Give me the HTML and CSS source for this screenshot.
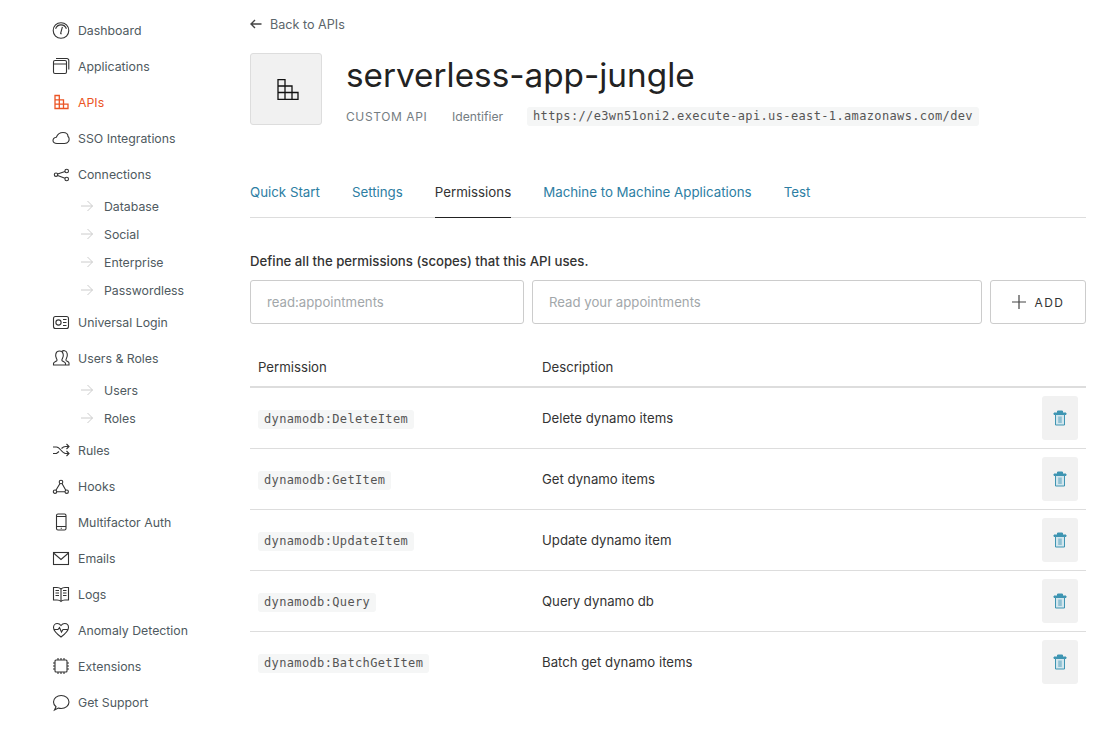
FILE: index.html
```html
<!DOCTYPE html>
<html lang="en">
<head>
  <meta charset="UTF-8">
  <meta name="viewport" content="width=device-width, initial-scale=1.0">
  <title>serverless-app-jungle</title>
  <link rel="stylesheet" href="styles.css">
</head>
<body>
  <div class="layout">
    <nav class="sidebar">
      <a class="nav-item"><svg class="nav-icon" viewBox="0 0 20 20"><circle cx="10" cy="10.500" r="7.800"/><path d="M4.600 8.800a5.700 5.700 0 0 1 10.800 0M11.400 6.800l-1.900 7M9.500 13.800h1.200"/></svg>Dashboard</a>
      <a class="nav-item"><svg class="nav-icon" viewBox="0 0 20 20"><rect x="2.500" y="4.500" width="13" height="13" rx="1.500"/><path d="M2.500 8h13M5 2.500h11a1.800 1.800 0 0 1 1.800 1.800v9.200"/></svg>Applications</a>
      <a class="nav-item active"><svg class="nav-icon" viewBox="0 0 20 20"><path d="M4 3.500h4.300v13H4zM4 7.800h8.500v8.700M4 12.200h13v4.300H4M8.300 7.800v8.700M12.500 12.200v4.300"/></svg>APIs</a>
      <a class="nav-item"><svg class="nav-icon" viewBox="0 0 20 20"><path d="M6 15.500c-2.500 0-4-1.200-4-3 0-1.800 1.500-3 3.300-3.300C6.500 6.500 9 4.500 12 4.500c3 0 5 1.800 5 4 1.300 1 1.500 3.500.5 5-1 1.500-2.500 2-4 2z"/></svg>SSO Integrations</a>
      <a class="nav-item"><svg class="nav-icon" viewBox="0 0 20 20"><circle cx="5" cy="10.700" r="1.700"/><circle cx="15.700" cy="7" r="1.800"/><circle cx="15.700" cy="15" r="1.800"/><path d="M6.600 10.100l7.400-2.500M6.600 11.400l7.400 2.900"/></svg>Connections</a>
      <div class="subnav">
        <a class="sub-item"><svg class="sub-arrow" viewBox="0 0 14 12"><path d="M1 6h11.500M7.500 1l5 5-5 5"/></svg>Database</a>
        <a class="sub-item"><svg class="sub-arrow" viewBox="0 0 14 12"><path d="M1 6h11.500M7.500 1l5 5-5 5"/></svg>Social</a>
        <a class="sub-item"><svg class="sub-arrow" viewBox="0 0 14 12"><path d="M1 6h11.500M7.500 1l5 5-5 5"/></svg>Enterprise</a>
        <a class="sub-item"><svg class="sub-arrow" viewBox="0 0 14 12"><path d="M1 6h11.500M7.500 1l5 5-5 5"/></svg>Passwordless</a>
      </div>
      <a class="nav-item"><svg class="nav-icon" viewBox="0 0 20 20"><rect x="2.500" y="4.500" width="15" height="12" rx="2"/><circle cx="7.500" cy="10.500" r="2.600"/><path d="M12 7.500h3.500M12 10.500h3.500M12 13.500h3.500"/></svg>Universal Login</a>
      <a class="nav-item"><svg class="nav-icon" viewBox="0 0 20 20"><path d="M2.500 17v-1.500c0-1.300 2.700-2 3.400-2.800.5-.7 0-1.500-.5-2.300C4 8 4.300 3 8.500 3s4.500 5 3 7.400c-.5.800-1 1.600-.5 2.300.7.800 3.500 1.500 3.500 2.800V17zM11 3.300c.8-.6 1.800-.8 2.700-.5 3 .7 3.200 5 1.800 7.500-.4.700-.9 1.400-.4 2.200.5.700 2.900 1.300 2.900 2.500V17h-3.500"/></svg>Users &amp; Roles</a>
      <div class="subnav">
        <a class="sub-item"><svg class="sub-arrow" viewBox="0 0 14 12"><path d="M1 6h11.500M7.500 1l5 5-5 5"/></svg>Users</a>
        <a class="sub-item"><svg class="sub-arrow" viewBox="0 0 14 12"><path d="M1 6h11.500M7.500 1l5 5-5 5"/></svg>Roles</a>
      </div>
      <a class="nav-item"><svg class="nav-icon" viewBox="0 0 20 20"><path d="M2 7h3.500c3.500 0 5.500 6.500 9 6.500H18M2 13.500h3.500l2.500-2M10.500 8.500c1-1 2.500-2 4-2H18M15.500 4l2.500 2.500L15.500 9M15.500 11l2.500 2.500-2.500 2.500"/></svg>Rules</a>
      <a class="nav-item"><svg class="nav-icon" viewBox="0 0 20 20"><circle cx="10" cy="6" r="1.800"/><circle cx="4" cy="15.700" r="1.700"/><circle cx="15.700" cy="15.700" r="1.700"/><path d="M9 7.500l-4.100 6.700M11 7.500l3.800 6.700M5.700 15.700h8.300"/></svg>Hooks</a>
      <a class="nav-item"><svg class="nav-icon" viewBox="0 0 20 20"><rect x="5.500" y="2" width="9.500" height="16" rx="1.500"/><path d="M5.500 4.500h9.500M5.500 14.500h9.500M9.700 16.300h1.200"/></svg>Multifactor Auth</a>
      <a class="nav-item"><svg class="nav-icon" viewBox="0 0 20 20"><rect x="2.500" y="4.500" width="15" height="12"/><path d="M2.500 5L10 11.500 17.500 5"/></svg>Emails</a>
      <a class="nav-item"><svg class="nav-icon" viewBox="0 0 20 20"><path d="M10 5c-1-1-2.500-1.500-4-1.500H2.500V16H6c1.500 0 3 .3 4 1.500 1-1.200 2.500-1.500 4-1.500h3.500V3.500H14c-1.500 0-3 .5-4 1.500zM10 5v12.500M4.500 6.500h3.500M4.500 9h3.500M4.500 11.500h3.500M12 6.500h3.500M12 9h3.500M12 11.500h3.500"/></svg>Logs</a>
      <a class="nav-item"><svg class="nav-icon" viewBox="0 0 20 20"><path d="M10 17C6 14 2.500 11 2.500 7.500 2.500 5 4.300 3.500 6.300 3.500c1.500 0 2.800.8 3.700 2 .9-1.200 2.200-2 3.700-2 2 0 3.800 1.500 3.800 4 0 3.500-3.500 6.500-7.500 9.500zM3.500 9.500H7l1.500-2 2 4.500 1.500-2.500h4.500"/></svg>Anomaly Detection</a>
      <a class="nav-item"><svg class="nav-icon" viewBox="0 0 20 20"><rect x="4" y="4" width="12" height="12" rx="1"/><path d="M2 7h2M2 10h2M2 13h2M16 7h2M16 10h2M16 13h2M7 2v2M10 2v2M13 2v2M7 16v2M10 16v2M13 16v2"/></svg>Extensions</a>
      <a class="nav-item"><svg class="nav-icon" viewBox="0 0 20 20"><path d="M5 14.800C3.400 13.500 2.500 11.900 2.500 10c0-3.600 3.400-6.500 7.700-6.500s7.800 2.900 7.800 6.500-3.500 6.500-7.800 6.500c-1 0-2-.2-2.900-.5L3.500 18z"/></svg>Get Support</a>
    </nav>

    <main class="content">
      <a class="back-link"><svg class="back-arrow" viewBox="0 0 12 10"><path d="M11.500 5H1.500M5 1L1 5l4 4"/></svg>Back to APIs</a>

      <header class="api-header">
        <div class="api-tile"><svg viewBox="0 0 22 21"><path d="M1 .5h7v20H1zM1 7h14v13.500M1 13.500h20v7H1M8 7v13.500M15 13.500v7"/></svg></div>
        <div>
          <h1>serverless-app-jungle</h1>
          <div class="api-meta">
            <span class="api-type">CUSTOM API</span>
            <span class="api-label">Identifier</span>
            <code class="code-tag">https://e3wn51oni2.execute-api.us-east-1.amazonaws.com/dev</code>
          </div>
        </div>
      </header>

      <div class="tabs">
        <a class="tab">Quick Start</a>
        <a class="tab">Settings</a>
        <a class="tab current">Permissions</a>
        <a class="tab">Machine to Machine Applications</a>
        <a class="tab">Test</a>
      </div>

      <p class="form-title">Define all the permissions (scopes) that this API uses.</p>
      <form class="add-form">
        <input class="field field-scope" type="text" placeholder="read:appointments">
        <input class="field field-desc" type="text" placeholder="Read your appointments">
        <button class="add-btn" type="button"><svg viewBox="0 0 14 14"><path d="M7 0v14M0 7h14"/></svg>ADD</button>
      </form>

      <table class="perm-table">
        <thead>
          <tr><th class="col-perm">Permission</th><th>Description</th><th></th></tr>
        </thead>
        <tbody>
          <tr>
            <td><code class="code-tag">dynamodb:DeleteItem</code></td>
            <td>Delete dynamo items</td>
            <td class="col-action"><button class="trash-btn" type="button"><svg viewBox="0 0 14 16"><path class="trash-lid" d="M1 3h12v1.500H1zM4.500 3V1h5v2"/><path class="trash-body" d="M2.500 4.500h9V15h-9z"/><path class="trash-bars" d="M5.200 6.500h3.600v6.500H5.200z"/></svg></button></td>
          </tr>
          <tr>
            <td><code class="code-tag">dynamodb:GetItem</code></td>
            <td>Get dynamo items</td>
            <td class="col-action"><button class="trash-btn" type="button"><svg viewBox="0 0 14 16"><path class="trash-lid" d="M1 3h12v1.500H1zM4.500 3V1h5v2"/><path class="trash-body" d="M2.500 4.500h9V15h-9z"/><path class="trash-bars" d="M5.200 6.500h3.600v6.500H5.200z"/></svg></button></td>
          </tr>
          <tr>
            <td><code class="code-tag">dynamodb:UpdateItem</code></td>
            <td>Update dynamo item</td>
            <td class="col-action"><button class="trash-btn" type="button"><svg viewBox="0 0 14 16"><path class="trash-lid" d="M1 3h12v1.500H1zM4.500 3V1h5v2"/><path class="trash-body" d="M2.500 4.500h9V15h-9z"/><path class="trash-bars" d="M5.200 6.500h3.600v6.500H5.200z"/></svg></button></td>
          </tr>
          <tr>
            <td><code class="code-tag">dynamodb:Query</code></td>
            <td>Query dynamo db</td>
            <td class="col-action"><button class="trash-btn" type="button"><svg viewBox="0 0 14 16"><path class="trash-lid" d="M1 3h12v1.500H1zM4.500 3V1h5v2"/><path class="trash-body" d="M2.500 4.500h9V15h-9z"/><path class="trash-bars" d="M5.200 6.500h3.600v6.500H5.200z"/></svg></button></td>
          </tr>
          <tr>
            <td><code class="code-tag">dynamodb:BatchGetItem</code></td>
            <td>Batch get dynamo items</td>
            <td class="col-action"><button class="trash-btn" type="button"><svg viewBox="0 0 14 16"><path class="trash-lid" d="M1 3h12v1.500H1zM4.500 3V1h5v2"/><path class="trash-body" d="M2.500 4.500h9V15h-9z"/><path class="trash-bars" d="M5.200 6.500h3.600v6.500H5.200z"/></svg></button></td>
          </tr>
        </tbody>
      </table>
    </main>
  </div>
</body>
</html>
```

FILE: styles.css
```css
* {
  box-sizing: border-box;
}
body {
  margin: 0;
  background: #fff;
  color: #333;
  font-family: Inter, "Liberation Sans", sans-serif;
  font-size: 13.2px;
}
.layout {
  display: flex;
  height: 744px;
  overflow: hidden;
  padding-right: 22px;
}

/* sidebar */
.sidebar {
  width: 250px;
  flex-shrink: 0;
  padding: 12px 0 0 51px;
  font-size: 12.3px;
}
.nav-item {
  display: flex;
  align-items: center;
  height: 36px;
  color: #4f5a60;
}
.nav-icon {
  width: 20px;
  height: 20px;
  margin-right: 7px;
  fill: none;
  stroke: #333;
  stroke-width: 1.1;
}
.nav-item.active {
  color: #eb5424;
}
.nav-item.active .nav-icon {
  stroke: #eb5424;
  stroke-width: 1.3;
}
.sub-item {
  display: flex;
  align-items: center;
  height: 28px;
  padding-left: 29px;
  color: #4f5a60;
}
.sub-arrow {
  width: 14px;
  height: 12px;
  margin-right: 10px;
  fill: none;
  stroke: #ccc;
  stroke-width: 1;
}

/* main column */
.content {
  flex: 1;
  min-width: 0;
  padding-top: 15px;
}
.back-link {
  display: flex;
  align-items: center;
  height: 18px;
  color: #5c666b;
  font-size: 12.6px;
}
.back-arrow {
  width: 12px;
  height: 10px;
  margin-right: 8px;
  fill: none;
  stroke: #444;
  stroke-width: 1.4;
}
.api-header {
  display: flex;
  gap: 24px;
  margin-top: 20px;
}
.api-tile {
  display: flex;
  align-items: center;
  justify-content: center;
  width: 72px;
  height: 72px;
  padding-left: 3px;
  background: #f1f1f1;
  border: 1px solid #ddd;
  border-radius: 3px;
}
.api-tile svg {
  width: 22px;
  height: 21px;
  fill: none;
  stroke: #111;
  stroke-width: 1.3;
}
h1 {
  margin: 0;
  height: 44px;
  color: #222;
  font-size: 33.3px;
  font-weight: 400;
  line-height: 44px;
}
.api-meta {
  display: flex;
  align-items: center;
  margin-top: 10px;
  color: #757d82;
}
.api-type {
  width: 106px;
  font-size: 12px;
  letter-spacing: 0.6px;
}
.api-label {
  width: 75px;
  font-size: 12.2px;
}
.code-tag {
  display: inline-block;
  padding: 2px 6px;
  background: #f5f6f6;
  border-radius: 3px;
  color: #555;
  font-family: "DejaVu Sans Mono", monospace;
  font-size: 12px;
  letter-spacing: 0.36px;
  line-height: 15px;
  vertical-align: -3px;
}
.tabs {
  display: flex;
  gap: 32px;
  height: 59px;
  margin-top: 33px;
  border-bottom: 1px solid #ddd;
  padding-top: 24px;
}
.tab {
  height: 35px;
  color: #2d7ea3;
  font-size: 13.3px;
  line-height: 18px;
}
.tab.current {
  border-bottom: 1px solid #222;
  color: #333;
}
.form-title {
  margin: 34px 0 0;
  color: #333;
  font-weight: 500;
  line-height: 18px;
}
.add-form {
  display: flex;
  gap: 8px;
  margin-top: 10px;
}
.field {
  height: 44px;
  border: 1px solid #ccc;
  border-radius: 3px;
  padding: 0 16px;
  font-family: inherit;
  font-size: 13.2px;
}
.field::placeholder {
  color: #a2a7aa;
  opacity: 1;
}
.field-scope {
  width: 274px;
}
.field-desc {
  width: 450px;
}
.add-btn {
  display: flex;
  align-items: center;
  justify-content: center;
  width: 96px;
  height: 44px;
  background: #fff;
  border: 1px solid #ccc;
  border-radius: 3px;
  color: #333;
  font-family: inherit;
  font-size: 12px;
  font-weight: 400;
  letter-spacing: 1.4px;
}
.add-btn svg {
  width: 14px;
  height: 14px;
  margin-right: 9px;
  stroke: #444;
  stroke-width: 1.2;
}
.perm-table {
  width: 100%;
  margin-top: 24px;
  border-collapse: collapse;
  color: #333;
}
.perm-table th {
  height: 39px;
  border-bottom: 2px solid #ddd;
  padding: 0 8px;
  font-weight: 400;
  text-align: left;
}
.perm-table th.col-perm {
  width: 284px;
}
.perm-table td {
  height: 61px;
  border-bottom: 1px solid #ddd;
  padding: 0 8px;
}
.perm-table tr:last-child td {
  border-bottom: none;
}
.col-action {
  text-align: right;
}
.trash-btn {
  display: inline-flex;
  align-items: center;
  justify-content: center;
  width: 36px;
  height: 44px;
  padding: 0;
  background: #f1f1f1;
  border: none;
  border-radius: 3px;
  vertical-align: middle;
}
.trash-btn svg {
  width: 14px;
  height: 16px;
  fill: none;
  stroke: #3f95b2;
  stroke-width: 1;
}
.trash-lid {
  fill: #3f95b2;
}
.trash-body {
  fill: #d3e6ed;
}
.trash-bars {
  fill: #8fc0d2;
  stroke: none;
}
```
